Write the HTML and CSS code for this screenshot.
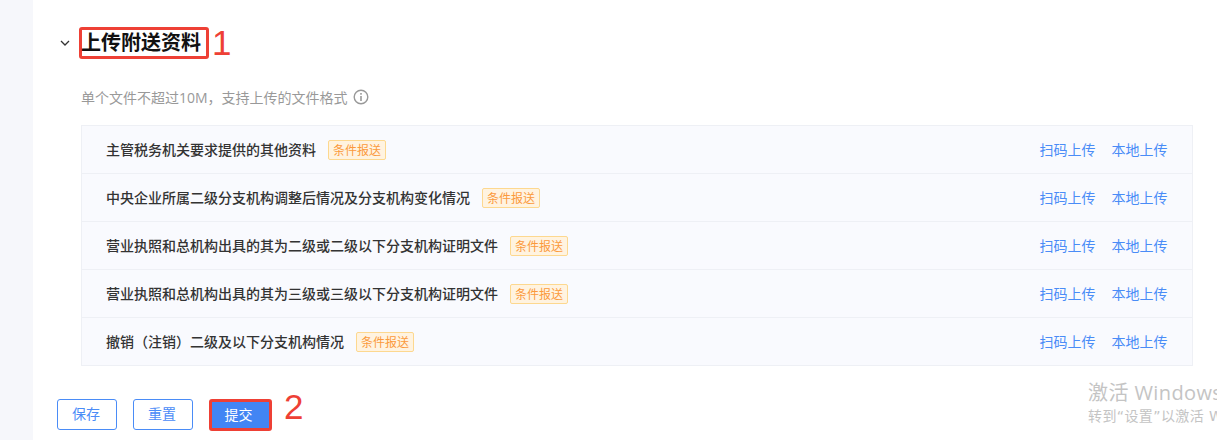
FILE: index.html
```html
<!DOCTYPE html>
<html lang="zh-CN">
<head>
  <meta charset="UTF-8" />
  <title>上传附送资料</title>
  <link rel="stylesheet" href="styles.css">
</head>
<body>
  <div class="page">
    <aside class="rail"></aside>
    <main class="content">
      <!-- Section title -->
      <div class="section-head">
        <svg class="chevron" width="10" height="6" viewBox="0 0 10 6"><path d="M1 1l4 4 4-4" fill="none" stroke="#333" stroke-width="1.3"/></svg>
        <h2 class="section-title">上传附送资料</h2>
        <span class="mark mark-one">1</span>
      </div>

      <p class="hint">单个文件不超过10M，支持上传的文件格式
        <svg class="hint-icon" width="16" height="16" viewBox="0 0 16 16"><circle cx="8" cy="8" r="6.8" fill="none" stroke="#999" stroke-width="1.4"/><rect x="7.2" y="7" width="1.6" height="5" fill="#999"/><rect x="7.2" y="4" width="1.6" height="1.7" fill="#999"/></svg>
      </p>

      <!-- File list -->
      <ul class="file-list">
        <li class="file-row">
          <span class="file-name">主管税务机关要求提供的其他资料</span>
          <span class="tag">条件报送</span>
          <span class="actions"><a>扫码上传</a><a>本地上传</a></span>
        </li>
        <li class="file-row">
          <span class="file-name">中央企业所属二级分支机构调整后情况及分支机构变化情况</span>
          <span class="tag">条件报送</span>
          <span class="actions"><a>扫码上传</a><a>本地上传</a></span>
        </li>
        <li class="file-row">
          <span class="file-name">营业执照和总机构出具的其为二级或二级以下分支机构证明文件</span>
          <span class="tag">条件报送</span>
          <span class="actions"><a>扫码上传</a><a>本地上传</a></span>
        </li>
        <li class="file-row">
          <span class="file-name">营业执照和总机构出具的其为三级或三级以下分支机构证明文件</span>
          <span class="tag">条件报送</span>
          <span class="actions"><a>扫码上传</a><a>本地上传</a></span>
        </li>
        <li class="file-row">
          <span class="file-name">撤销（注销）二级及以下分支机构情况</span>
          <span class="tag">条件报送</span>
          <span class="actions"><a>扫码上传</a><a>本地上传</a></span>
        </li>
      </ul>

      <div class="buttons">
        <button class="btn">保存</button>
        <button class="btn">重置</button>
        <button class="btn btn-primary">提交</button>
        <span class="mark mark-two">2</span>
      </div>
    </main>
  </div>

  <div class="watermark">
    <div class="watermark-title">激活 Windows</div>
    <div class="watermark-sub">转到“设置”以激活 Windows。</div>
  </div>
</body>
</html>
```

FILE: styles.css
```css
html, body {
  margin: 0;
  padding: 0;
  height: 440px;
  overflow: hidden;
  background: #fff;
  font-family: "Noto Sans CJK SC", "Liberation Sans", sans-serif;
  color: #333;
}

.page {
  display: flex;
  height: 440px;
}

.rail {
  width: 33px;
  flex: none;
  background: #f6f7fb;
}

.content {
  flex: 1;
  padding: 27px 25px 0 24px;
  min-width: 0;
}

.section-head {
  display: flex;
  align-items: center;
  height: 32px;
}

.chevron {
  margin-left: 3px;
  margin-right: 9px;
}

.section-title {
  margin: 0;
  box-sizing: border-box;
  width: 130px;
  height: 32px;
  line-height: 23px;
  text-indent: -1px;
  font-size: 20px;
  font-weight: 700;
  color: #111;
  border: 3px solid #ee4035;
  border-radius: 3px;
  white-space: nowrap;
}

.mark {
  font-family: "Liberation Sans", sans-serif;
  font-size: 35px;
  line-height: 1;
  color: #ee4035;
}

.mark-one {
  margin-left: 3px;
  margin-top: -2px;
}

.mark-two {
  margin-left: -4px;
  align-self: flex-start;
  margin-top: -10px;
}

.hint {
  display: flex;
  align-items: center;
  margin: 28px 0 0 24px;
  height: 20px;
  font-family: "Open Sans", "Noto Sans CJK SC", sans-serif;
  font-size: 14px;
  color: #999;
}

.hint-icon {
  margin-left: 5px;
}

.file-list {
  list-style: none;
  margin: 18px 0 0 24px;
  padding: 0;
  width: 1112px;
  border: 1px solid #eef0f5;
  border-bottom: 0;
  box-sizing: border-box;
  background: #f9fafe;
}

.file-row {
  display: flex;
  align-items: center;
  box-sizing: border-box;
  height: 48px;
  padding: 0 24px;
  border-bottom: 1px solid #eef0f5;
  font-size: 14px;
  line-height: 20px;
}

.file-name {
  padding-bottom: 2px;
  font-weight: 500;
  color: #333;
}

.tag {
  margin-left: 12px;
  box-sizing: border-box;
  height: 20px;
  line-height: 18px;
  padding: 0 4px;
  font-size: 12px;
  color: #fb9a3c;
  background: #fff3e0;
  border: 1px solid #fdd88f;
  border-radius: 2px;
}

.actions {
  margin-left: auto;
  display: flex;
  gap: 16px;
  padding: 0 0.5px 2px 0;
  color: #4a8cf7;
}

.buttons {
  display: flex;
  gap: 16px;
  margin-top: 33px;
}

.btn {
  box-sizing: border-box;
  width: 60px;
  height: 31px;
  padding: 0 2px 4px 0;
  font: inherit;
  font-size: 14px;
  color: #4a8cf7;
  background: #fff;
  border: 1px solid #4a8cf7;
  border-radius: 3px;
}

.btn-primary {
  width: 63px;
  height: 32px;
  padding: 0 4px 3px 0;
  color: #fff;
  background: #4285f4;
  border: 3px solid #ee4035;
}

.watermark {
  position: absolute;
  left: 1088px;
  top: 380px;
  width: 129px;
  overflow: hidden;
  white-space: nowrap;
  color: #c4c4c4;
}

.watermark-title {
  font-family: "Open Sans", "Noto Sans CJK SC", sans-serif;
  font-size: 20px;
  line-height: 26px;
  letter-spacing: 0.4px;
}

.watermark-sub {
  font-family: "DejaVu Sans", "Noto Sans CJK SC", sans-serif;
  font-size: 14px;
  line-height: 20px;
  letter-spacing: 0.4px;
}
```
